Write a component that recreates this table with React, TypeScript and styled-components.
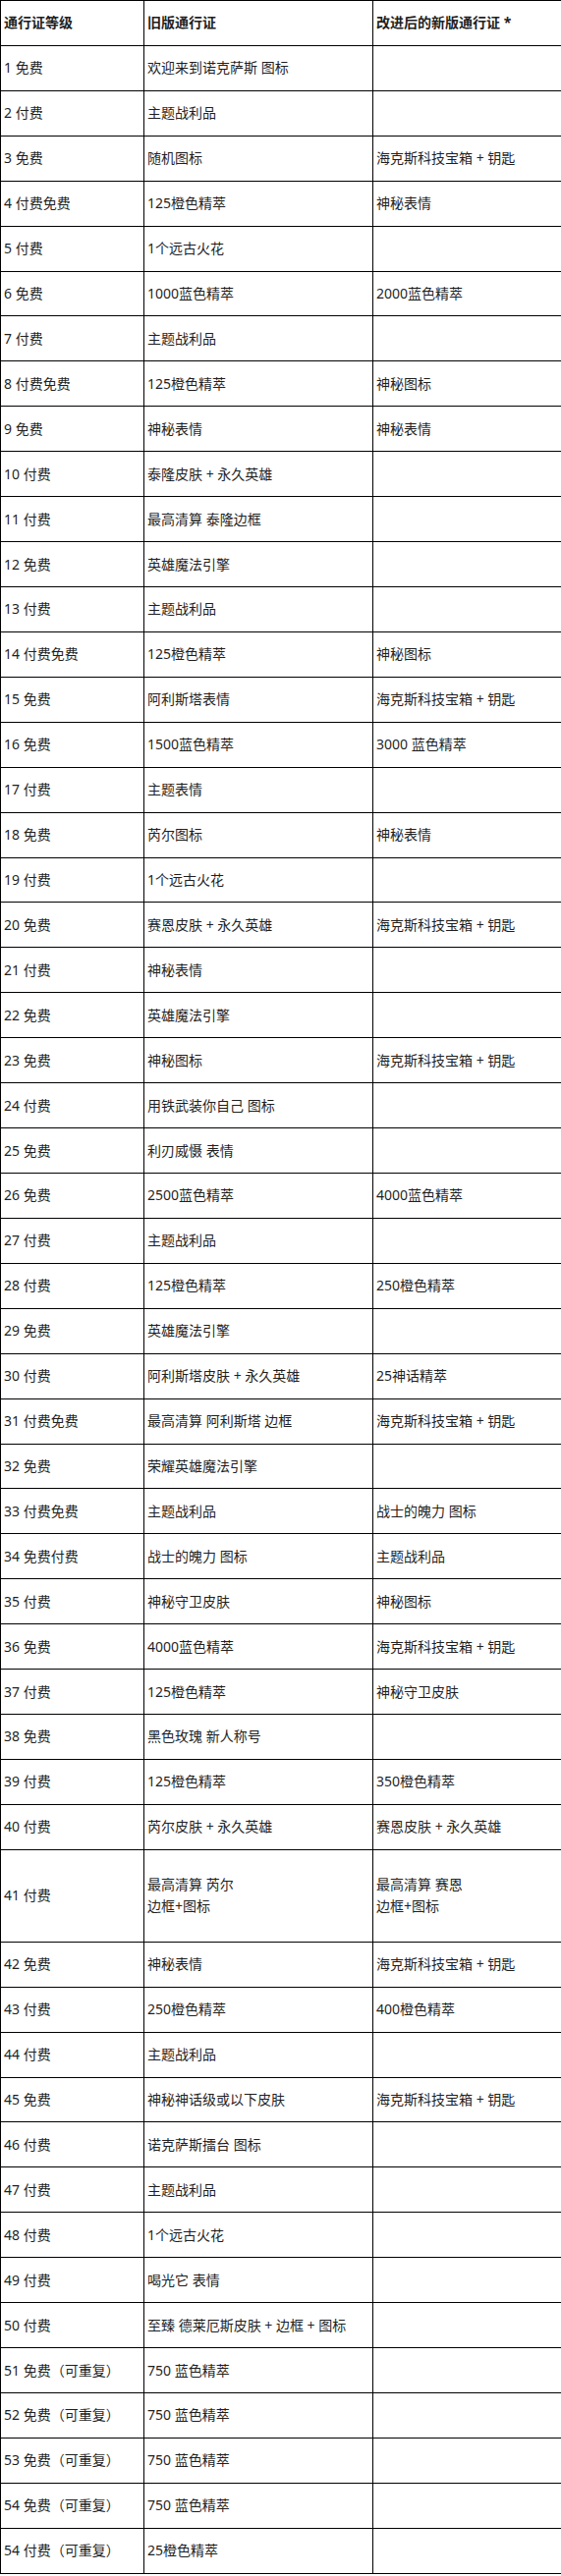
import React from "react";
import styled, { createGlobalStyle } from "styled-components";

const Global = createGlobalStyle`
  html, body { margin: 0; padding: 0; background: #ffffff; }
  body { font-family: "Noto Sans", "Noto Sans CJK SC", sans-serif; }
`;

const Table = styled.table`
  width: 571px;
  table-layout: fixed;
  border-collapse: collapse;
  font-size: 14px;
  color: #1f1f1f;
  font-family: "Noto Sans", "Noto Sans CJK SC", sans-serif;
`;

const Row = styled.tr<{ $tall?: boolean }>`
  height: ${(p) => (p.$tall ? "94px" : "45.93px")};
`;

const Cell = styled.td`
  border: 1px solid #000;
  padding: 0 3px;
  vertical-align: middle;
  line-height: 22px;
  white-space: nowrap;
  overflow: hidden;
`;

const HeadCell = styled.th`
  border: 1px solid #000;
  padding: 0 3px;
  vertical-align: middle;
  text-align: left;
  font-weight: 700;
  line-height: 22px;
  white-space: nowrap;
`;

const Line = styled.div`
  line-height: 22px;
`;

type R = [string, string, string];

const rows: R[] = [
  ["1 免费", "欢迎来到诺克萨斯 图标", ""],
  ["2 付费", "主题战利品", ""],
  ["3 免费", "随机图标", "海克斯科技宝箱 + 钥匙"],
  ["4 付费免费", "125橙色精萃", "神秘表情"],
  ["5 付费", "1个远古火花", ""],
  ["6 免费", "1000蓝色精萃", "2000蓝色精萃"],
  ["7 付费", "主题战利品", ""],
  ["8 付费免费", "125橙色精萃", "神秘图标"],
  ["9 免费", "神秘表情", "神秘表情"],
  ["10 付费", "泰隆皮肤 + 永久英雄", ""],
  ["11 付费", "最高清算 泰隆边框", ""],
  ["12 免费", "英雄魔法引擎", ""],
  ["13 付费", "主题战利品", ""],
  ["14 付费免费", "125橙色精萃", "神秘图标"],
  ["15 免费", "阿利斯塔表情", "海克斯科技宝箱 + 钥匙"],
  ["16 免费", "1500蓝色精萃", "3000 蓝色精萃"],
  ["17 付费", "主题表情", ""],
  ["18 免费", "芮尔图标", "神秘表情"],
  ["19 付费", "1个远古火花", ""],
  ["20 免费", "赛恩皮肤 + 永久英雄", "海克斯科技宝箱 + 钥匙"],
  ["21 付费", "神秘表情", ""],
  ["22 免费", "英雄魔法引擎", ""],
  ["23 免费", "神秘图标", "海克斯科技宝箱 + 钥匙"],
  ["24 付费", "用铁武装你自己 图标", ""],
  ["25 免费", "利刃威慑 表情", ""],
  ["26 免费", "2500蓝色精萃", "4000蓝色精萃"],
  ["27 付费", "主题战利品", ""],
  ["28 付费", "125橙色精萃", "250橙色精萃"],
  ["29 免费", "英雄魔法引擎", ""],
  ["30 付费", "阿利斯塔皮肤 + 永久英雄", "25神话精萃"],
  ["31 付费免费", "最高清算 阿利斯塔 边框", "海克斯科技宝箱 + 钥匙"],
  ["32 免费", "荣耀英雄魔法引擎", ""],
  ["33 付费免费", "主题战利品", "战士的魄力 图标"],
  ["34 免费付费", "战士的魄力 图标", "主题战利品"],
  ["35 付费", "神秘守卫皮肤", "神秘图标"],
  ["36 免费", "4000蓝色精萃", "海克斯科技宝箱 + 钥匙"],
  ["37 付费", "125橙色精萃", "神秘守卫皮肤"],
  ["38 免费", "黑色玫瑰 新人称号", ""],
  ["39 付费", "125橙色精萃", "350橙色精萃"],
  ["40 付费", "芮尔皮肤 + 永久英雄", "赛恩皮肤 + 永久英雄"],
  ["41 付费", "最高清算 芮尔\n边框+图标", "最高清算 赛恩\n边框+图标"],
  ["42 免费", "神秘表情", "海克斯科技宝箱 + 钥匙"],
  ["43 付费", "250橙色精萃", "400橙色精萃"],
  ["44 付费", "主题战利品", ""],
  ["45 免费", "神秘神话级或以下皮肤", "海克斯科技宝箱 + 钥匙"],
  ["46 付费", "诺克萨斯擂台 图标", ""],
  ["47 付费", "主题战利品", ""],
  ["48 付费", "1个远古火花", ""],
  ["49 付费", "喝光它 表情", ""],
  ["50 付费", "至臻 德莱厄斯皮肤 + 边框 + 图标", ""],
  ["51 免费（可重复）", "750 蓝色精萃", ""],
  ["52 免费（可重复）", "750 蓝色精萃", ""],
  ["53 免费（可重复）", "750 蓝色精萃", ""],
  ["54 免费（可重复）", "750 蓝色精萃", ""],
  ["54 付费（可重复）", "25橙色精萃", ""],
];

function Content({ text }: { text: string }) {
  const parts = text.split("\n");
  if (parts.length === 1) return <>{text}</>;
  return (
    <>
      {parts.map((p, i) => (
        <Line key={i}>{p}</Line>
      ))}
    </>
  );
}

export default function App() {
  return (
    <>
      <Global />
      <Table>
        <colgroup>
          <col style={{ width: 146 }} />
          <col style={{ width: 233 }} />
          <col style={{ width: 192 }} />
        </colgroup>
        <thead>
          <Row>
            <HeadCell>通行证等级</HeadCell>
            <HeadCell>旧版通行证</HeadCell>
            <HeadCell>改进后的新版通行证 *</HeadCell>
          </Row>
        </thead>
        <tbody>
          {rows.map((r, i) => (
            <Row key={i} $tall={r[1].includes("\n")}>
              <Cell>{r[0]}</Cell>
              <Cell>
                <Content text={r[1]} />
              </Cell>
              <Cell>
                <Content text={r[2]} />
              </Cell>
            </Row>
          ))}
        </tbody>
      </Table>
    </>
  );
}
